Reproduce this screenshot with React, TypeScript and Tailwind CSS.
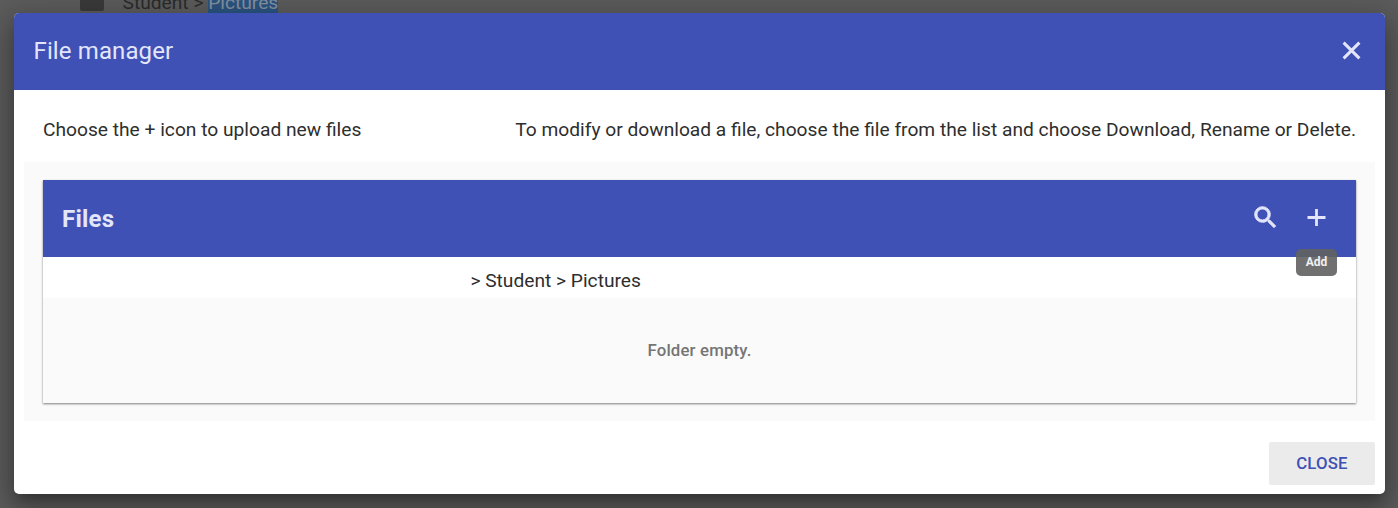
export default function App() {
  return (
    <div className="relative h-[508px] w-[1398px] overflow-hidden bg-[#5c5c5c] font-[Roboto,sans-serif] text-[#2e2e2e]">
      <div className="flex h-[13px] items-start pl-20 text-[19.2px]">
        <div className="h-[11px] w-6 shrink-0 rounded-b-[2px] bg-[#3a3a3a]" />
        <div className="ml-[18.5px] h-[13px] whitespace-nowrap leading-[22px] text-[#2b2b2b]">
          <div className="-mt-[8px]">
            Student &gt; <span className="bg-[#2b5480] text-[#8492a0]">Pictures</span>
          </div>
        </div>
      </div>
      <div className="relative ml-[14px] flex h-[481px] w-[1371px] flex-col rounded-[5px] bg-white shadow-[0_8px_10px_-5px_rgba(0,0,0,0.25),0_14px_29px_2px_rgba(0,0,0,0.22),0_7px_30px_6px_rgba(0,0,0,0.16)]">
        <header className="flex h-[77px] shrink-0 items-center justify-between rounded-t-[5px] bg-[#3f51b5] pb-[2px] pl-[19.5px] pr-[19px] text-[#e3e6fa]">
          <h1 className="text-[24px] tracking-[0.005em]">File manager</h1>
          <svg viewBox="0 0 29 29" className="size-[29px]" fill="none" stroke="currentColor" strokeWidth="3">
            <path d="M6.6 6.6l15.8 15.8M22.4 6.6L6.6 22.4" />
          </svg>
        </header>
        <div className="flex h-[72px] shrink-0 items-center justify-between whitespace-nowrap px-[29px] pt-[8px] text-[19.2px]">
          <span>Choose the + icon to upload new files</span>
          <span>To modify or download a file, choose the file from the list and choose Download, Rename or Delete.</span>
        </div>
        <main className="mx-[10px] h-[259px] shrink-0 bg-[#fafafa] px-[19px] pt-[18px]">
          <section className="h-[223px] w-[1313px] shadow-[0_1px_2px_rgba(0,0,0,0.5)]">
            <div className="flex h-[77px] items-center bg-[#3f51b5] pl-[19px] pr-[25px] text-[#e3e6fa]">
              <h2 className="grow text-[24px] font-bold tracking-[0.01em]">Files</h2>
              <svg viewBox="0 0 24 24" className="mb-[2px] mr-[22.5px] size-[29px]" fill="currentColor" stroke="currentColor" strokeWidth="0.7">
                <path d="M15.5 14h-.79l-.28-.27A6.471 6.471 0 0 0 16 9.5 6.5 6.5 0 1 0 9.5 16c1.61 0 3.09-.59 4.23-1.57l.27.28v.79l5 4.99L20.49 19l-4.99-5zm-6 0C7.01 14 5 11.99 5 9.5S7.01 5 9.5 5 14 7.01 14 9.5 11.99 14 9.5 14z" />
              </svg>
              <div className="relative mb-[2px]">
                <svg viewBox="0 0 29 29" className="size-[29px]" fill="none" stroke="currentColor" strokeWidth="2.8">
                  <path d="M14.5 6v17M5.5 14.5h18" />
                </svg>
                <div className="absolute left-[-6px] top-[46px] flex h-[27px] w-[41px] items-center justify-center rounded-[5px] bg-[#616161]/90 pb-[2px] text-[12px] font-bold text-white/90">Add</div>
              </div>
            </div>
            <div className="flex h-[41px] items-center bg-white pl-[427.4px] pt-[7px] text-[19.2px]">&gt; Student &gt; Pictures</div>
            <div className="flex h-[105px] items-center justify-center text-[16.8px] font-medium tracking-[0.01em] text-[#757575]">Folder empty.</div>
          </section>
        </main>
        <footer className="flex grow items-end justify-end pb-[9px] pr-[10px]">
          <button className="h-[43px] w-[106px] rounded-[2px] bg-[#ebebeb] text-[16.8px] font-medium tracking-[0.01em] text-[#3f51b5]">CLOSE</button>
        </footer>
      </div>
    </div>
  );
}
